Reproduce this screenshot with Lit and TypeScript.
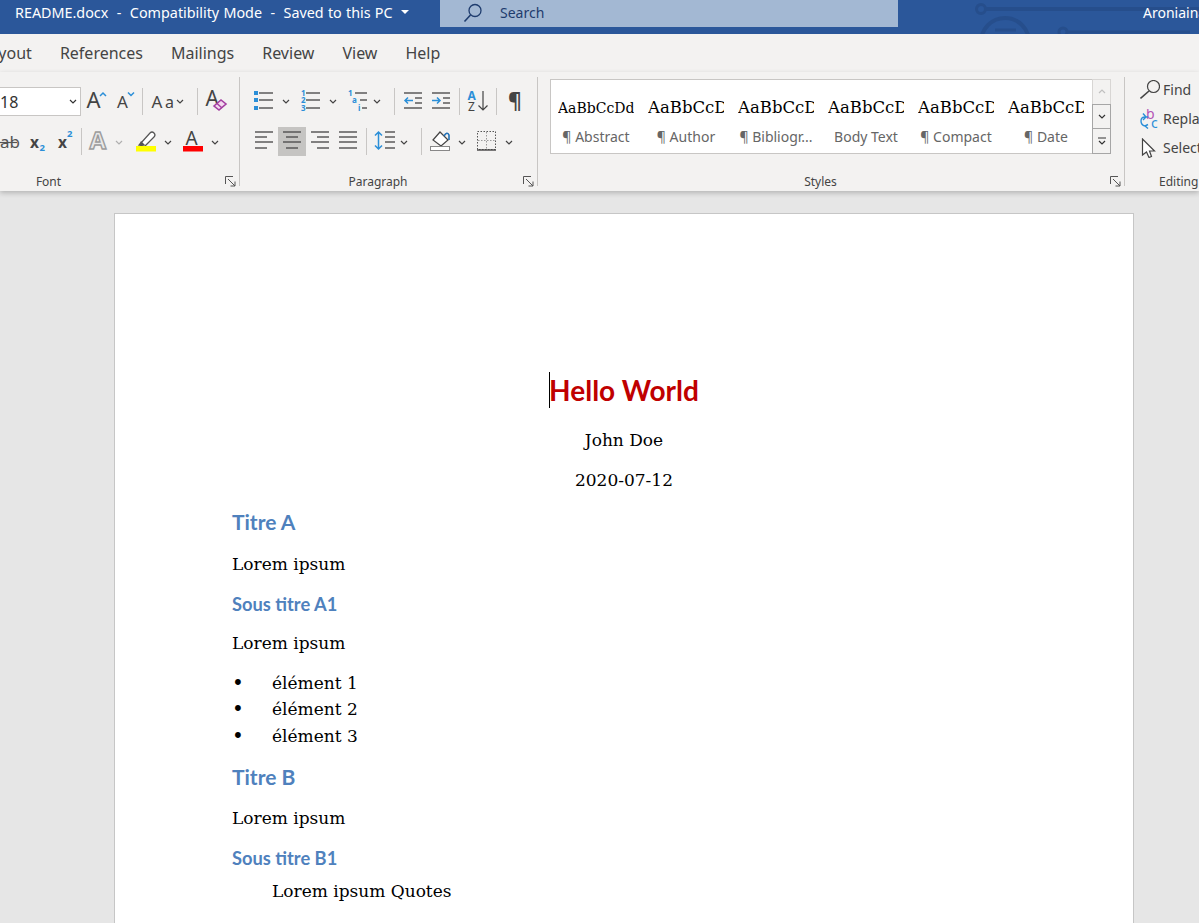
import { LitElement, css, html, svg } from "lit";
import { customElement } from "lit/decorators.js";

const INK = "#505050";
const BLUE = "#2b8fd8";

// icons are drawn in page coordinates, the viewBox cuts out the slot they sit in
const sv = (x0: number, y0: number, x1: number, y1: number, c: unknown) =>
  html`<svg class="ico" width=${x1 - x0} height=${y1 - y0} viewBox=${`${x0} ${y0} ${x1 - x0} ${y1 - y0}`}>${c}</svg>`;

const chev = (x: number, y: number, col = "#444") =>
  svg`<polyline points=${`${x},${y} ${x + 3},${y + 3} ${x + 6},${y}`} fill="none" stroke=${col} stroke-width="1.2" />`;

const hl = (x1: number, x2: number, y: number, col = INK) =>
  svg`<line x1=${x1} x2=${x2} y1=${y} y2=${y} stroke=${col} stroke-width="1.4" />`;

const txt = (x: number, y: number, size: number, s: string, col = "#444", weight = 400) =>
  svg`<text x=${x} y=${y} font-size=${size} font-weight=${weight} fill=${col} font-family="Noto Sans, sans-serif">${s}</text>`;

const fontTop = sv(81, 87, 142, 116, svg`
  ${txt(86.5, 108, 22, "A")}
  <polyline points="100,96 103,93 106,96" fill="none" stroke=${BLUE} stroke-width="1.5" />
  ${txt(117, 108, 17, "A")}
  <polyline points="128,92.5 131,95.5 134,92.5" fill="none" stroke=${BLUE} stroke-width="1.5" />
`);
const fontCase = sv(143, 87, 197, 116, svg`
  ${txt(151.5, 108, 17, "A")}
  ${txt(165, 108, 16, "a")}
  ${chev(177, 100)}
`);
const fontClear = sv(198, 87, 239, 116, svg`
  ${txt(205.5, 106, 21, "A")}
  <path d="M214 106 L221 100 L226 104 L219 110 Z" fill="#f3d9ef" stroke="#a33ea1" stroke-width="1.6" />
  <line x1="217" y1="103.5" x2="222" y2="108" stroke="#a33ea1" stroke-width="1.4" />
`);
const fontFx = sv(-121, 127, 81, 156, svg`
  ${txt(0, 148, 17, "ab", "#555")}
  <line x1="-1" x2="17" y1="142.5" y2="142.5" stroke="#555" stroke-width="1.2" />
  ${txt(30, 148, 15.5, "x", "#444", 700)}
  ${txt(39.5, 151, 9.5, "2", BLUE, 700)}
  ${txt(58, 148, 15.5, "x", "#444", 700)}
  ${txt(67, 137, 9.5, "2", BLUE, 700)}
`);
const fontColor = sv(82, 127, 239, 156, svg`
  <text x="89.5" y="149" font-size="24" font-weight="700" fill="#e8e8e8" stroke="#9c9c9c" stroke-width="1.4" font-family="Noto Sans, sans-serif">A</text>
  ${chev(116, 141, "#b0b0b0")}
  <path d="M141 143 L150 133 Q152 131 154 133 Q156 135 154 137 L145 146 L139 145 Z" fill="#fff" stroke="#555" stroke-width="1.2" />
  <path d="M139 145 L141 141 L145 145 Z" fill="#555" />
  <rect x="136" y="146" width="20" height="5.5" fill="#ffff00" />
  ${chev(165, 141)}
  ${txt(185.5, 145, 19, "A")}
  <rect x="183" y="146" width="20" height="5.5" fill="#ff0000" />
  ${chev(212, 141)}
`);

const paraLists = sv(240, 87, 394, 116, svg`
  <rect x="254" y="91" width="4" height="4" fill=${BLUE} />
  <rect x="254" y="98" width="4" height="4" fill=${BLUE} />
  <rect x="254" y="106" width="4" height="4" fill=${BLUE} />
  ${hl(259, 273, 93)}${hl(259, 273, 100)}${hl(259, 273, 108)}
  ${chev(283, 100)}
  ${txt(301, 96, 8, "1", BLUE, 700)}${txt(301, 103, 8, "2", BLUE, 700)}${txt(301, 111, 8, "3", BLUE, 700)}
  ${hl(306, 320, 93)}${hl(306, 320, 100)}${hl(306, 320, 108)}
  ${chev(330, 100)}
  ${txt(348, 95.5, 8, "1", BLUE, 700)}${txt(352, 103, 8, "a", BLUE, 700)}${txt(358, 111, 8, "i", BLUE, 700)}
  ${hl(355, 367, 93)}${hl(360, 367, 100)}${hl(362, 367, 108)}
  ${chev(374, 100)}
`);
const paraIndent = sv(395, 87, 459, 116, svg`
  ${hl(404, 422, 93)}${hl(404, 422, 108)}${hl(415, 422, 98)}${hl(415, 422, 103)}
  <path d="M413 100.5 H405 M408 97.5 L405 100.5 L408 103.5" fill="none" stroke=${BLUE} stroke-width="1.5" />
  ${hl(432, 450, 93)}${hl(432, 450, 108)}${hl(443, 450, 98)}${hl(443, 450, 103)}
  <path d="M432 100.5 H440 M437 97.5 L440 100.5 L437 103.5" fill="none" stroke=${BLUE} stroke-width="1.5" />
`);
const paraSort = sv(460, 87, 496, 116, svg`
  ${txt(467.5, 100, 12, "A", BLUE, 700)}
  ${txt(468, 111, 12, "Z", "#444", 400)}
  <path d="M483 91 V110 M478.5 105.5 L483 110 L487.5 105.5" fill="none" stroke="#444" stroke-width="1.2" />
`);
const paraMark = sv(497, 87, 537, 116, txt(508, 108, 21, "¶", "#444", 700));

const alignLeft = sv(240, 127, 278, 156, svg`
  ${hl(255, 273, 132)}${hl(255, 267, 137)}${hl(255, 273, 142)}${hl(255, 267, 148)}
`);
const alignCenter = sv(278, 127, 306, 156, svg`
  ${hl(283, 301, 132)}${hl(286, 298, 137)}${hl(283, 301, 142)}${hl(286, 298, 148)}
`);
const alignRest = sv(306, 127, 366, 156, svg`
  ${hl(311, 329, 132)}${hl(317, 329, 137)}${hl(311, 329, 142)}${hl(317, 329, 148)}
  ${hl(339, 357, 132)}${hl(339, 357, 137)}${hl(339, 357, 142)}${hl(339, 357, 148)}
`);
const lineSpacing = sv(367, 127, 421, 156, svg`
  <path d="M378.5 132 V149 M375 135.5 L378.5 132 L382 135.5 M375 145.5 L378.5 149 L382 145.5" fill="none" stroke=${BLUE} stroke-width="1.5" />
  ${hl(385, 395, 132)}${hl(385, 395, 137)}${hl(385, 395, 142)}${hl(385, 395, 148)}
  ${chev(401, 141)}
`);
const shading = sv(422, 127, 537, 156, svg`
  <path d="M433 140 L440 132 L448 140 L441 146 Z" fill="#fff" stroke="#444" stroke-width="1.2" />
  <path d="M444 136 Q447 131 449 135 L449 140" fill="none" stroke="#1f6fb5" stroke-width="1.6" />
  <rect x="430.5" y="146.5" width="19" height="4" fill="#fff" stroke="#888" />
  ${chev(459, 141)}
  <rect x="477.5" y="131.5" width="18" height="18" fill="none" stroke="#555" stroke-dasharray="1.5 1.5" />
  <line x1="486.5" x2="486.5" y1="132" y2="149" stroke="#999" stroke-dasharray="1.5 1.5" />
  <line x1="478" x2="495" y1="140.5" y2="140.5" stroke="#999" stroke-dasharray="1.5 1.5" />
  <line x1="477" x2="496" y1="150" y2="150" stroke="#444" stroke-width="1.4" />
  ${chev(506, 141)}
`);

const launcher = html`<svg class="launch" width="11" height="11" viewBox="0 0 11 11">
  <path d="M.5 8 V.5 H8 M3 3 L10 10 M10 5.5 V10 H5.5" fill="none" stroke="#555" />
</svg>`;

const styleItems = [
  { label: "¶ Abstract", small: true },
  { label: "¶ Author" },
  { label: "¶ Bibliogr..." },
  { label: "Body Text" },
  { label: "¶ Compact" },
  { label: "¶ Date" },
];

@customElement("app-root")
export class AppRoot extends LitElement {
  static override styles = css`
    :host {
      display: flex;
      flex-direction: column;
      position: relative;
      width: 1199px;
      height: 923px;
      overflow: hidden;
      font-family: "Noto Sans", sans-serif;
      background: #e6e6e6;
    }
    .ico {
      display: block;
      flex: none;
    }

    /* title bar */
    .titlebar {
      display: flex;
      position: relative;
      flex: none;
      height: 34px;
      background: #2b579a;
      color: #fff;
      font-size: 14px;
      overflow: hidden;
    }
    .doc-name {
      display: flex;
      flex: none;
      align-items: center;
      gap: 8px;
      width: 425px;
      height: 24px;
      padding-left: 15px;
      font-size: 14.35px;
      word-spacing: 0.5px;
      white-space: pre;
    }
    .doc-name i {
      border-left: 4px solid transparent;
      border-right: 4px solid transparent;
      border-top: 4px solid #fff;
    }
    .search {
      display: flex;
      flex: none;
      align-items: center;
      gap: 17px;
      box-sizing: content-box;
      width: 435px;
      height: 25px;
      padding: 0 0 2px 23px;
      background: #a3b8d3;
      color: #1f3c6e;
    }
    .circuit {
      position: absolute;
      right: 0;
      top: 0;
    }
    .user {
      position: relative;
      margin-left: 245px;
      height: 26px;
      line-height: 26px;
      white-space: nowrap;
    }

    /* tabs */
    .tabs {
      display: flex;
      flex: none;
      align-items: center;
      gap: 28px;
      height: 38px;
      margin-left: -19px;
      background: #f3f2f1;
      color: #444;
      font-size: 16px;
    }

    /* ribbon */
    .ribbon {
      display: flex;
      flex: none;
      position: relative;
      height: 119px;
      background: #f3f2f1;
      box-shadow: 0 2px 5px rgba(0, 0, 0, 0.22);
      color: #444;
    }
    .group {
      display: flex;
      flex: none;
      flex-direction: column;
      position: relative;
      box-sizing: border-box;
      height: 109px;
      margin-top: 5px;
      padding-top: 10px;
      border-right: 1px solid #c8c6c4;
    }
    .group.font {
      width: 361px;
      margin-left: -121px;
    }
    .group.para {
      width: 298px;
    }
    .group.styles {
      width: 587px;
      padding-top: 2px;
    }
    .group.editing {
      width: 120px;
      padding-top: 0;
      border-right: none;
    }
    .row {
      display: flex;
      flex: none;
      justify-content: flex-end;
      align-items: center;
      height: 29px;
    }
    .row + .row {
      margin-top: 11px;
    }
    .sep {
      flex: none;
      width: 1px;
      height: 27px;
      background: #c8c6c4;
    }
    .on {
      background: #c5c4c2;
    }
    .combo {
      display: flex;
      flex: none;
      align-items: center;
      box-sizing: border-box;
      width: 102px;
      height: 29px;
      padding-left: 20px;
      background: #fff;
      border: 1px solid #c8c6c4;
      font-size: 16px;
      color: #333;
    }
    .combo .ico {
      margin-left: auto;
      margin-right: 3px;
    }
    .label {
      position: absolute;
      left: 0;
      right: 21px;
      top: 97px;
      height: 16px;
      line-height: 16px;
      text-align: center;
      font-size: 12px;
      color: #444;
    }
    .launch {
      position: absolute;
      right: 3px;
      top: 99px;
    }

    /* styles gallery */
    .gallery {
      display: flex;
      flex: none;
      box-sizing: border-box;
      width: 561px;
      height: 75px;
      margin-left: 12px;
      background: #fff;
      border: 1px solid #c8c6c4;
    }
    .item {
      flex: none;
      box-sizing: border-box;
      width: 90px;
      padding: 15px 0 0 7px;
    }
    .preview {
      width: 76px;
      height: 26px;
      overflow: hidden;
      line-height: 26px;
      font-family: "DejaVu Serif", serif;
      font-size: 16.5px;
      color: #000;
      white-space: nowrap;
    }
    .preview.small {
      font-size: 14px;
    }
    .item-label {
      width: 76px;
      margin-top: 6px;
      line-height: 20px;
      font-size: 14px;
      color: #666;
      text-align: center;
      white-space: nowrap;
    }
    .scroll {
      display: flex;
      flex: none;
      flex-direction: column;
      width: 19px;
      margin: -1px -1px -1px auto;
    }
    .scroll div {
      display: flex;
      flex: 1;
      align-items: center;
      justify-content: center;
      background: #f3f2f1;
      border: 1px solid #a6a6a6;
    }
    .scroll div + div {
      margin-top: -1px;
    }
    .scroll div.off {
      border-color: #d8d6d4;
    }

    /* editing */
    .edit-item {
      display: flex;
      align-items: center;
      gap: 3px;
      height: 29px;
      margin-left: 15px;
      font-size: 14px;
      color: #444;
    }
    .edit-list {
      margin-top: -2px;
    }
    .group.editing .label {
      left: 34px;
      right: auto;
    }

    /* document */
    .canvas {
      flex: 1;
      min-height: 0;
      padding: 22px 0 0 114px;
      background: #e6e6e6;
    }
    .page {
      position: relative;
      box-sizing: border-box;
      width: 1020px;
      height: 900px;
      padding: 158px 117px 0;
      background: #fff;
      border: 1px solid #c6c6c6;
      font-family: "DejaVu Serif", serif;
      font-size: 17px;
      line-height: 26px;
      color: #000;
    }
    .page p,
    .page h1,
    .page h2,
    .page ul {
      margin: 0;
      padding: 0;
    }
    .doc-title {
      height: 36px;
      line-height: 36px;
      text-align: center;
      font-family: Lato, sans-serif;
      font-size: 28px;
      font-weight: 700;
      color: #c00000;
    }
    .doc-title span {
      position: relative;
    }
    .doc-title i {
      position: absolute;
      left: 0;
      top: -1px;
      width: 1px;
      height: 36px;
      background: #000;
    }
    .center {
      text-align: center;
    }
    .page h1,
    .page h2 {
      font-family: Lato, sans-serif;
      font-weight: 700;
      color: #4f81bd;
    }
    .page h1 {
      margin-top: 16px;
      font-size: 21px;
    }
    .page ul + h1 {
      margin-top: 15px;
    }
    .page h2 {
      margin-top: 14px;
      font-size: 18.3px;
    }
    .page p {
      margin-top: 15px;
    }
    .page h2 + p {
      margin-top: 13px;
    }
    .page p.lead {
      margin-top: 16px;
    }
    .page p.author {
      margin-top: 19px;
    }
    .page p.date {
      margin-top: 14px;
    }
    .page ul {
      margin-top: 14px;
      list-style: none;
    }
    .page li {
      display: flex;
    }
    .page li:last-child {
      margin-top: 1px;
    }
    .page li b {
      width: 40px;
      font-size: 20px;
      font-weight: 400;
    }
    .page p.quote {
      margin-top: 7px;
      padding-left: 40px;
    }
  `;

  override render() {
    return html`
      <div class="titlebar">
        <svg class="circuit" width="224" height="34" viewBox="975 0 224 34" fill="none" stroke="#264e8c" stroke-width="3">
          <circle cx="981" cy="9" r="4.5" />
          <line x1="986" x2="1199" y1="9" y2="9" stroke-width="4" />
          <circle cx="1005" cy="42" r="24" stroke-width="4" />
          <line x1="995" x2="1016" y1="30" y2="30" />
          <circle cx="1063" cy="32" r="4" />
          <line x1="1067" x2="1190" y1="32" y2="32" />
        </svg>
        <div class="doc-name">README.docx  -  Compatibility Mode  -  Saved to this PC<i></i></div>
        <div class="search">
          <svg class="ico" width="20" height="20" viewBox="0 0 20 20" fill="none" stroke="#1f3c6e" stroke-width="1.3">
            <circle cx="12" cy="7.5" r="6" />
            <line x1="7.5" y1="12" x2="1.5" y2="18.5" stroke-width="1.6" />
          </svg>
          Search
        </div>
        <div class="user">Aroniaina</div>
      </div>

      <div class="tabs">
        <span>Layout</span><span>References</span><span>Mailings</span><span>Review</span><span>View</span><span>Help</span>
      </div>

      <div class="ribbon">
        <div class="group font">
          <div class="row">
            <div class="combo">18${sv(0, 0, 8, 5, chev(1, 1, "#333"))}</div>
            ${fontTop}<div class="sep"></div>${fontCase}<div class="sep"></div>${fontClear}
          </div>
          <div class="row">${fontFx}<div class="sep"></div>${fontColor}</div>
          <div class="label">Font</div>
          ${launcher}
        </div>

        <div class="group para">
          <div class="row">
            ${paraLists}<div class="sep"></div>${paraIndent}<div class="sep"></div>${paraSort}<div class="sep"></div>${paraMark}
          </div>
          <div class="row">
            ${alignLeft}<div class="on">${alignCenter}</div>${alignRest}<div class="sep"></div>${lineSpacing}<div class="sep"></div>${shading}
          </div>
          <div class="label">Paragraph</div>
          ${launcher}
        </div>

        <div class="group styles">
          <div class="gallery">
            ${styleItems.map(
              (it) => html`<div class="item">
                <div class="preview ${it.small ? "small" : ""}">AaBbCcDd</div>
                <div class="item-label">${it.label}</div>
              </div>`,
            )}
            <div class="scroll">
              <div class="off">${sv(0, 0, 8, 5, svg`<polyline points="1,4 4,1 7,4" fill="none" stroke="#c0c0c0" stroke-width="1.2" />`)}</div>
              <div>${sv(0, 0, 8, 5, chev(1, 1, "#333"))}</div>
              <div>${sv(0, 0, 8, 8, svg`<line x1="0" x2="8" y1="1" y2="1" stroke="#333" />${chev(1, 4, "#333")}`)}</div>
            </div>
          </div>
          <div class="label">Styles</div>
          ${launcher}
        </div>

        <div class="group editing">
          <div class="edit-list">
            <div class="edit-item">
              ${sv(0, 0, 20, 20, svg`<circle cx="13.5" cy="6.5" r="6" fill="none" stroke="#444" stroke-width="1.2" /><line x1="9" y1="11" x2="0.5" y2="18.5" stroke="#444" stroke-width="1.6" />`)}
              Find
            </div>
            <div class="edit-item">
              ${sv(0, 0, 20, 20, svg`
                ${txt(6, 10, 14, "b", "#b455b6", 400)}
                ${txt(11, 19, 14, "c", BLUE, 400)}
                <path d="M8 8 H5 Q1 8 1 12 Q1 16 5 17 M3 4.5 L6 8 L3 11 M8 15.5 L5 17 L8 19.5" fill="none" stroke=${BLUE} stroke-width="1.4" />
              `)}
              Replace
            </div>
            <div class="edit-item">
              ${sv(0, 0, 20, 20, svg`<path d="M2.5 1 V17 L6.5 14 L9 19.5 L11.5 18.5 L9.5 13 L14.5 13 Z" fill="#fff" stroke="#444" stroke-width="1.2" />`)}
              Select
            </div>
          </div>
          <div class="label">Editing</div>
        </div>
      </div>

      <div class="canvas">
        <div class="page">
          <div class="doc-title"><span><i></i>Hello World</span></div>
          <p class="center author">John Doe</p>
          <p class="center date">2020-07-12</p>
          <h1>Titre A</h1>
          <p class="lead">Lorem ipsum</p>
          <h2>Sous titre A1</h2>
          <p>Lorem ipsum</p>
          <ul>
            <li><b>•</b>élément 1</li>
            <li><b>•</b>élément 2</li>
            <li><b>•</b>élément 3</li>
          </ul>
          <h1>Titre B</h1>
          <p>Lorem ipsum</p>
          <h2>Sous titre B1</h2>
          <p class="quote">Lorem ipsum Quotes</p>
        </div>
      </div>
    `;
  }
}
